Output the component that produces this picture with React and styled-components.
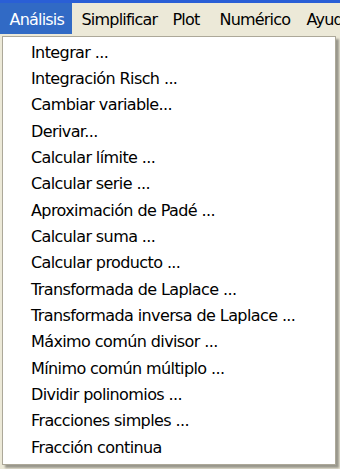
import React from "react"
import styled, { createGlobalStyle } from "styled-components"

const GlobalStyle = createGlobalStyle`
  html, body {
    margin: 0;
    padding: 0;
    background: #ECE9D8;
  }
  body {
    font-family: "DejaVu Sans", Tahoma, sans-serif;
  }
`

// menu bar entries, widths read off the XP menu bar
const barItems = [
  { label: "Análisis", w: 72 },
  { label: "Simplificar", w: 91 },
  { label: "Plot", w: 47 },
  { label: "Numérico", w: 87 },
  { label: "Ayuda", w: 60 },
]

const menuItems = [
  "Integrar ...",
  "Integración Risch ...",
  "Cambiar variable...",
  "Derivar...",
  "Calcular límite ...",
  "Calcular serie ...",
  "Aproximación de Padé ...",
  "Calcular suma ...",
  "Calcular producto ...",
  "Transformada de Laplace ...",
  "Transformada inversa de Laplace ...",
  "Máximo común divisor ...",
  "Mínimo común múltiplo ...",
  "Dividir polinomios ...",
  "Fracciones simples ...",
  "Fracción continua",
]

const App = () => {
  return (
    <Frame>
      <GlobalStyle />
      <TitleEdge />
      <MenuBar>
        {barItems.map((item, i) => (
          <BarItem key={item.label} $w={item.w} $active={i === 0}>{item.label}</BarItem>
        ))}
      </MenuBar>

      <Dropdown>
        {menuItems.map(label => (
          <MenuItem key={label}>{label}</MenuItem>
        ))}
      </Dropdown>
    </Frame>
  )
}

const Frame = styled.div`
  position: relative;
  width: 340px;
  height: 469px;
  overflow: hidden;
  background: #ECE9D8;
`

const TitleEdge = styled.div`
  height: 3px;
  background: #2a5fd6;
`

const MenuBar = styled.div`
  display: flex;
  height: 33px;
  background: #ECE9D8;
  white-space: nowrap;
`

const BarItem = styled.div`
  flex: 0 0 ${p => p.$w}px;
  height: 31px;
  box-sizing: border-box;
  padding: 3px 0 0 9.5px;
  overflow: hidden;
  line-height: 28px;
  font-size: 16px;
  letter-spacing: -0.8px;
  color: ${p => p.$active ? "#ffffff" : "#000000"};
  background: ${p => p.$active ? "#316AC5" : "transparent"};
`

const Dropdown = styled.div`
  position: absolute;
  top: 36px;
  left: 2px;
  width: 334px;
  box-sizing: border-box;
  padding: 2.8px 0;
  background: #ffffff;
  border: 1px solid #ACA899;
  box-shadow: 3px 3px 2px rgba(0, 0, 0, 0.35);
`

const MenuItem = styled.div`
  height: 26.33px;
  line-height: 26.33px;
  padding-left: 28px;
  font-size: 16px;
  letter-spacing: -0.6px;
  color: #000000;
  white-space: nowrap;
`

export default App
